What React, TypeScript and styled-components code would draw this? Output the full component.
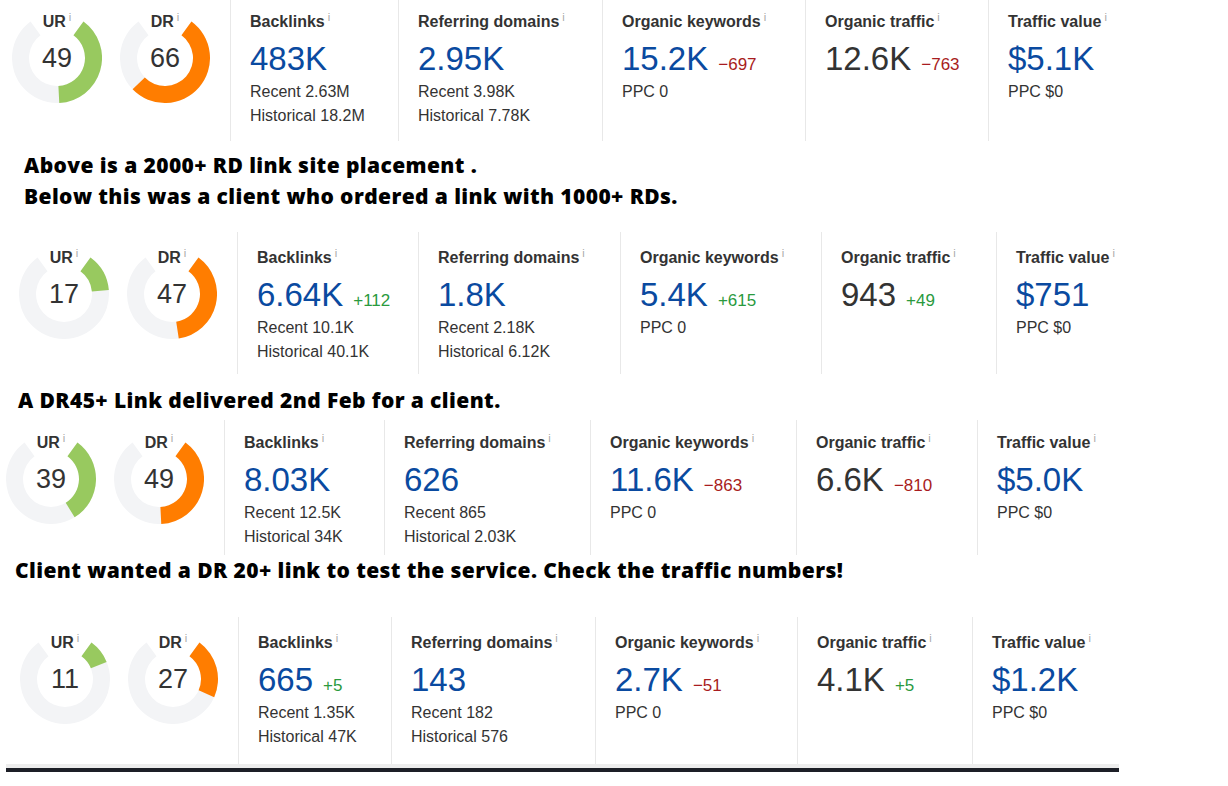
import React from "react";
import styled, { createGlobalStyle } from "styled-components";

const GlobalStyle = createGlobalStyle`
  body {
    margin: 0;
    background: #ffffff;
    font-family: "Liberation Sans", Arial, sans-serif;
    color: #333333;
  }
`;

interface Delta {
  text: string;
  up: boolean;
}

interface Metric {
  title: string;
  value: string;
  dark?: boolean;
  delta?: Delta;
  lines: string[];
}

interface BlockData {
  ur: number;
  dr: number;
  pl: number;
  pt: number;
  mt: number;
  height: number;
  widths: number[];
  metrics: Metric[];
}

const Page = styled.div`
  display: flex;
  flex-direction: column;
  width: 1228px;
`;

const Widget = styled.div<{ $mt: number; $h: number }>`
  display: flex;
  margin-top: ${(p) => p.$mt}px;
  height: ${(p) => p.$h}px;
`;

const RatingArea = styled.div<{ $pl: number; $pt: number }>`
  display: flex;
  gap: 18px;
  padding: ${(p) => p.$pt + 1}px 20px 0 ${(p) => p.$pl}px;
`;

const DonutWrap = styled.div`
  display: grid;
  width: 90px;
  height: 90px;
  & > * {
    grid-area: 1 / 1;
  }
`;

const DonutLabel = styled.div`
  justify-self: center;
  align-self: start;
  margin-top: -1px;
  line-height: 20px;
  font-size: 16px;
  font-weight: 700;
  color: #333333;
  white-space: nowrap;
`;

const DonutValue = styled.div`
  justify-self: center;
  align-self: center;
  font-size: 27px;
  color: #333333;
`;

const Column = styled.div<{ $w?: number; $pt: number }>`
  box-sizing: border-box;
  ${(p) => (p.$w ? `width: ${p.$w}px; flex: none;` : "flex: 1;")}
  border-left: 1px solid #e8e8e8;
  padding: ${(p) => p.$pt}px 0 0 19px;
  white-space: nowrap;
`;

const Title = styled.div`
  font-size: 16px;
  font-weight: 700;
  line-height: 20px;
  color: #333333;
`;

const Info = styled.span`
  position: relative;
  top: -6px;
  margin-left: 3px;
  font-size: 11px;
  font-weight: 400;
  color: #a8a8a8;
`;

const ValueRow = styled.div`
  display: flex;
  align-items: baseline;
  gap: 10px;
  height: 38px;
  margin-top: 7px;
  line-height: 38px;
`;

const BigNum = styled.span<{ $dark?: boolean }>`
  font-size: 33px;
  color: ${(p) => (p.$dark ? "#333333" : "#0a4aa0")};
`;

const DeltaText = styled.span<{ $up: boolean }>`
  font-size: 17px;
  line-height: 20px;
  color: ${(p) => (p.$up ? "#2a9a3e" : "#a81c20")};
`;

const SubList = styled.div`
  margin-top: 2px;
`;

const SubLine = styled.div`
  font-size: 16px;
  line-height: 24px;
  color: #333333;
`;

const Caption = styled.div<{ $mt: number; $ml: number }>`
  margin: ${(p) => p.$mt}px 0 0 ${(p) => p.$ml}px;
  font-family: "Open Sans", "Noto Sans", sans-serif;
  font-weight: 800;
  font-size: 21px;
  letter-spacing: 0.4px;
  line-height: 31px;
  color: #000000;
  white-space: nowrap;
`;

const BottomRule = styled.div`
  margin-left: 6px;
  width: 1113px;
  border-top: 4px solid #ededed;
  height: 4px;
  background: #1d1f27;
`;

const R_OUT = 45;
const R_IN = 28;

const polar = (r: number, deg: number) => {
  const a = (deg * Math.PI) / 180;
  return [45 + r * Math.sin(a), 45 - r * Math.cos(a)];
};

const segment = (a0: number, a1: number) => {
  const large = a1 - a0 > 180 ? 1 : 0;
  const [x0, y0] = polar(R_OUT, a0);
  const [x1, y1] = polar(R_OUT, a1);
  const [x2, y2] = polar(R_IN, a1);
  const [x3, y3] = polar(R_IN, a0);
  return `M${x0} ${y0} A${R_OUT} ${R_OUT} 0 ${large} 1 ${x1} ${y1} L${x2} ${y2} A${R_IN} ${R_IN} 0 ${large} 0 ${x3} ${y3} Z`;
};

const Donut = ({ label, value, color }: { label: string; value: number; color: string }) => {
  const start = 36;
  const end = start + (288 * value) / 100;
  return (
    <DonutWrap>
      <svg width="90" height="90" viewBox="0 0 90 90">
        <path d={segment(start, 324)} fill="#f3f4f6" />
        <path d={segment(start, end)} fill={color} />
      </svg>
      <DonutLabel>
        {label}
        <Info>i</Info>
      </DonutLabel>
      <DonutValue>{value}</DonutValue>
    </DonutWrap>
  );
};

const Block = ({ data }: { data: BlockData }) => (
  <Widget $mt={data.mt} $h={data.height}>
    <RatingArea $pl={data.pl} $pt={data.pt}>
      <Donut label="UR" value={data.ur} color="#98c95f" />
      <Donut label="DR" value={data.dr} color="#ff7d00" />
    </RatingArea>
    {data.metrics.map((m, i) => (
      <Column key={m.title} $w={data.widths[i]} $pt={data.pt}>
        <Title>
          {m.title}
          <Info>i</Info>
        </Title>
        <ValueRow>
          <BigNum $dark={m.dark}>{m.value}</BigNum>
          {m.delta && <DeltaText $up={m.delta.up}>{m.delta.text}</DeltaText>}
        </ValueRow>
        <SubList>
          {m.lines.map((l) => (
            <SubLine key={l}>{l}</SubLine>
          ))}
        </SubList>
      </Column>
    ))}
  </Widget>
);

const blocks: BlockData[] = [
  {
    ur: 49, dr: 66, pl: 12, pt: 12, mt: 0, height: 141,
    widths: [168, 204, 203, 183],
    metrics: [
      { title: "Backlinks", value: "483K", lines: ["Recent 2.63M", "Historical 18.2M"] },
      { title: "Referring domains", value: "2.95K", lines: ["Recent 3.98K", "Historical 7.78K"] },
      { title: "Organic keywords", value: "15.2K", delta: { text: "\u2212697", up: false }, lines: ["PPC 0"] },
      { title: "Organic traffic", value: "12.6K", dark: true, delta: { text: "\u2212763", up: false }, lines: [] },
      { title: "Traffic value", value: "$5.1K", lines: ["PPC $0"] },
    ],
  },
  {
    ur: 17, dr: 47, pl: 19, pt: 16, mt: 20, height: 142,
    widths: [181, 202, 201, 175],
    metrics: [
      { title: "Backlinks", value: "6.64K", delta: { text: "+112", up: true }, lines: ["Recent 10.1K", "Historical 40.1K"] },
      { title: "Referring domains", value: "1.8K", lines: ["Recent 2.18K", "Historical 6.12K"] },
      { title: "Organic keywords", value: "5.4K", delta: { text: "+615", up: true }, lines: ["PPC 0"] },
      { title: "Organic traffic", value: "943", dark: true, delta: { text: "+49", up: true }, lines: [] },
      { title: "Traffic value", value: "$751", lines: ["PPC $0"] },
    ],
  },
  {
    ur: 39, dr: 49, pl: 6, pt: 13, mt: 4, height: 135,
    widths: [160, 206, 206, 181],
    metrics: [
      { title: "Backlinks", value: "8.03K", lines: ["Recent 12.5K", "Historical 34K"] },
      { title: "Referring domains", value: "626", lines: ["Recent 865", "Historical 2.03K"] },
      { title: "Organic keywords", value: "11.6K", delta: { text: "\u2212863", up: false }, lines: ["PPC 0"] },
      { title: "Organic traffic", value: "6.6K", dark: true, delta: { text: "\u2212810", up: false }, lines: [] },
      { title: "Traffic value", value: "$5.0K", lines: ["PPC $0"] },
    ],
  },
  {
    ur: 11, dr: 27, pl: 20, pt: 16, mt: 31, height: 147,
    widths: [153, 204, 202, 175],
    metrics: [
      { title: "Backlinks", value: "665", delta: { text: "+5", up: true }, lines: ["Recent 1.35K", "Historical 47K"] },
      { title: "Referring domains", value: "143", lines: ["Recent 182", "Historical 576"] },
      { title: "Organic keywords", value: "2.7K", delta: { text: "\u221251", up: false }, lines: ["PPC 0"] },
      { title: "Organic traffic", value: "4.1K", dark: true, delta: { text: "+5", up: true }, lines: [] },
      { title: "Traffic value", value: "$1.2K", lines: ["PPC $0"] },
    ],
  },
];

export default function App() {
  return (
    <Page>
      <GlobalStyle />
      <Block data={blocks[0]} />
      <Caption $mt={9} $ml={24}>
        Above is a 2000+ RD link site placement .
        <br />
        Below this was a client who ordered a link with 1000+ RDs.
      </Caption>
      <Block data={blocks[1]} />
      <Caption $mt={11} $ml={18}>A DR45+ Link delivered 2nd Feb for a client.</Caption>
      <Block data={blocks[2]} />
      <Caption $mt={0} $ml={15}>
        Client wanted a DR 20+ link to test the service. Check the traffic numbers!
      </Caption>
      <Block data={blocks[3]} />
      <BottomRule />
    </Page>
  );
}
